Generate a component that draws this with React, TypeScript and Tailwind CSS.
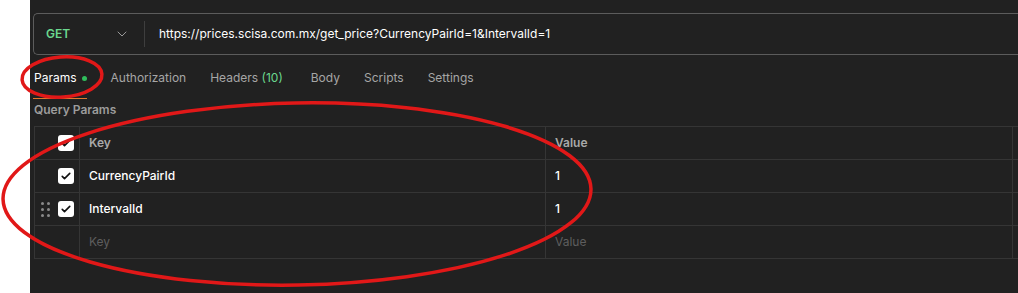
import { ChevronDown } from 'lucide-react';

const rows = [
  { key: 'CurrencyPairId', value: '1', drag: false },
  { key: 'IntervalId', value: '1', drag: true },
];

function Check() {
  return (
    <div className="w-4 h-4 rounded-[3px] bg-white flex items-center justify-center">
      <svg viewBox="0 0 16 16" className="w-3 h-3">
        <path d="M3 8.5l3 3 7-7" fill="none" stroke="#111" strokeWidth="2.2" strokeLinecap="round" strokeLinejoin="round" />
      </svg>
    </div>
  );
}

function Dots() {
  return (
    <div className="grid grid-cols-2 gap-[3px]">
      {[0, 1, 2, 3, 4, 5].map(i => (
        <span key={i} className="w-[3px] h-[3px] rounded-full bg-[#8a8a8a]" />
      ))}
    </div>
  );
}

export default function App() {
  return (
    <div className="relative w-[1018px] h-[293px] bg-white overflow-hidden" style={{ fontFamily: 'Inter, "Noto Sans", sans-serif' }}>
      <div className="ml-[30px] h-full bg-[#212121] pt-[13px] pl-[3px]">
        {/* URL bar */}
        <div className="flex items-center h-[42px] border border-[#5c5c5c] rounded-[5px] border-r-0 rounded-r-none">
          <div className="flex items-center w-[110px] pl-[12px] pr-[14px] justify-between">
            <span className="text-[12px] font-semibold text-[#6bd88f]">GET</span>
            <ChevronDown className="w-4 h-4 text-[#9a9a9a]" strokeWidth={1.5} />
          </div>
          <div className="w-px h-[26px] bg-[#3e3e3e]" />
          <span className="pl-[14px] text-[12px] text-white">
            https://prices.scisa.com.mx/get_price?CurrencyPairId=1&amp;IntervalId=1
          </span>
        </div>

        {/* Tabs */}
        <div className="flex items-end h-[44px] gap-[24px] text-[12px] leading-[16px] text-[#a6a6a6]">
          <div className="flex flex-col">
            <div className="flex items-center gap-[5px] pl-[1px] pb-[12px]">
              <span className="text-white">Params</span>
              <span className="w-[5px] h-[5px] rounded-full bg-[#2fbe5c]" />
            </div>
            <div className="h-px bg-[#e07a2f]" />
          </div>
          <span className="pb-[13px]">Authorization</span>
          <span className="pb-[13px]">
            Headers <span className="text-[#6bd88f]">(10)</span>
          </span>
          <span className="pb-[13px] ml-[4px]">Body</span>
          <span className="pb-[13px]">Scripts</span>
          <span className="pb-[13px]">Settings</span>
        </div>

        <div className="pt-[3px] pb-[8px] pl-[1px] text-[12px] leading-[16px] font-semibold text-[#9c9c9c]">Query Params</div>

        {/* Table */}
        <div className="border-l border-t border-[#353535] ml-[1px] w-[1000px] text-[12px]">
          <div className="flex h-[33px] border-b border-[#353535]">
            <div className="w-[45px] flex items-center justify-end pr-[5px] border-r border-[#353535]">
              <Check />
            </div>
            <div className="w-[466px] flex items-center pl-[9px] font-semibold text-[#a9a9a9] border-r border-[#353535]">Key</div>
            <div className="w-[467px] flex items-center pl-[9px] font-semibold text-[#a9a9a9] border-r border-[#353535]">Value</div>
            <div className="flex-1 border-r border-[#353535]" />
          </div>
          {rows.map(r => (
            <div key={r.key} className="flex h-[33px] border-b border-[#353535]">
              <div className="w-[45px] flex items-center justify-between pl-[6px] pr-[5px] border-r border-[#353535]">
                {r.drag ? <Dots /> : <span />}
                <Check />
              </div>
              <div className="w-[466px] flex items-center pl-[9px] font-medium text-white border-r border-[#353535]">{r.key}</div>
              <div className="w-[467px] flex items-center pl-[9px] font-medium text-white border-r border-[#353535]">{r.value}</div>
              <div className="flex-1 border-r border-[#353535]" />
            </div>
          ))}
          <div className="flex h-[33px] border-b border-[#353535]">
            <div className="w-[45px] border-r border-[#353535]" />
            <div className="w-[466px] flex items-center pl-[9px] text-[#5e5e5e] border-r border-[#353535]">Key</div>
            <div className="w-[467px] flex items-center pl-[9px] text-[#5e5e5e] border-r border-[#353535]">Value</div>
            <div className="flex-1 border-r border-[#353535]" />
          </div>
        </div>
      </div>

      {/* annotation ellipses */}
      <svg className="absolute inset-0 pointer-events-none" width="1018" height="293">
        <ellipse cx="62" cy="77" rx="40" ry="20" fill="none" stroke="#e11818" strokeWidth="3.5" transform="rotate(-4 62 77)" />
        <ellipse cx="297" cy="194" rx="294" ry="91" fill="none" stroke="#e11818" strokeWidth="3.5" transform="rotate(-1 297 194)" />
      </svg>
    </div>
  );
}
